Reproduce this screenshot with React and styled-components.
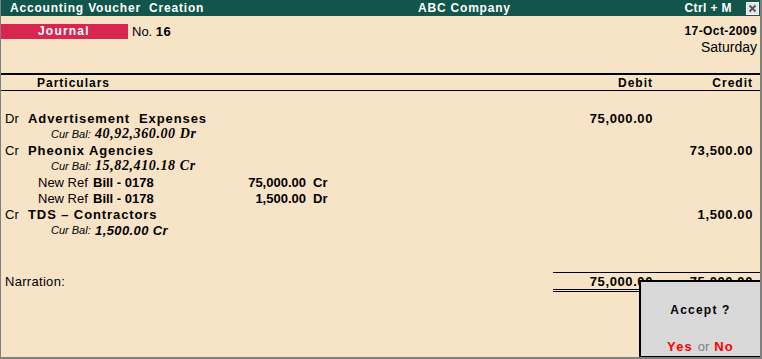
import styled, { createGlobalStyle } from 'styled-components';

const GlobalStyle = createGlobalStyle`
  html, body {
    margin: 0;
    padding: 0;
    background: #ffffff;
  }
  * {
    box-sizing: border-box;
  }
`;

const colors = {
  bg: '#f7e3c6',
  title: '#12554a',
  red: '#d92650',
  border: '#808080',
  black: '#000000',
  box: '#d9d9d9',
  alert: '#ff0000',
};

const rows = [
  { type: 'ledger', side: 'Dr', name: 'Advertisement  Expenses', debit: '75,000.00' },
  { type: 'bal', value: '40,92,360.00 Dr', serif: true },
  { type: 'ledger', side: 'Cr', name: 'Pheonix Agencies', credit: '73,500.00' },
  { type: 'bal', value: '15,82,410.18 Cr', serif: true },
  { type: 'ref', bill: 'Bill - 0178', amount: '75,000.00', dc: 'Cr' },
  { type: 'ref', bill: 'Bill - 0178', amount: '1,500.00', dc: 'Dr' },
  { type: 'ledger', side: 'Cr', name: 'TDS \u2013 Contractors', credit: '1,500.00' },
  { type: 'bal', value: '1,500.00 Cr' },
];

const App = () => {
  return (
    <>
      <GlobalStyle />
      <StWindow>
        <StTitleBar>
          <StTitleLeft>Accounting Voucher&nbsp; Creation</StTitleLeft>
          <StTitleCenter>ABC Company</StTitleCenter>
          <StTitleRight>Ctrl + M</StTitleRight>
          <StClose>
            <svg width="11" height="11" viewBox="0 0 11 11">
              <path d="M2.5 2.5 L8.5 8.5 M8.5 2.5 L2.5 8.5" stroke="#555" strokeWidth="1.8" />
            </svg>
          </StClose>
        </StTitleBar>

        <StHead>
          <StVoucher>
            <StBadge>Journal</StBadge>
            <StNo>
              No. <b>16</b>
            </StNo>
          </StVoucher>
          <StDate>
            <b>17-Oct-2009</b>
            <span>Saturday</span>
          </StDate>
        </StHead>

        <StColumns>
          <StParticulars>Particulars</StParticulars>
          <StAmountHead>Debit</StAmountHead>
          <StAmountHead>Credit</StAmountHead>
        </StColumns>

        <StBody>
          {rows.map((row, i) => (
            <StRow key={i}>
              {row.type === 'ledger' && (
                <StCell>
                  <StSide>{row.side}</StSide>
                  <StLedger>{row.name}</StLedger>
                </StCell>
              )}
              {row.type === 'bal' && (
                <StCell $indent={50}>
                  <StBalLabel>Cur Bal:</StBalLabel>
                  <StBalValue $serif={row.serif}>{row.value}</StBalValue>
                </StCell>
              )}
              {row.type === 'ref' && (
                <StCell $indent={37}>
                  <StRefLabel>New Ref</StRefLabel>
                  <StBill>{row.bill}</StBill>
                  <StRefAmount>{row.amount}</StRefAmount>
                  <StRefDc>{row.dc}</StRefDc>
                </StCell>
              )}
              <StAmount>{row.debit}</StAmount>
              <StAmount>{row.credit}</StAmount>
            </StRow>
          ))}
        </StBody>

        <StFooter>
          <StNarration>Narration:</StNarration>
          <StTotals>
            <StAmount>75,000.00</StAmount>
            <StAmount>75,000.00</StAmount>
          </StTotals>
        </StFooter>

        <StAccept>
          <StAcceptTitle>Accept ?</StAcceptTitle>
          <StAcceptChoice>
            <em>Yes</em> <span>or</span> <em>No</em>
          </StAcceptChoice>
        </StAccept>
      </StWindow>
    </>
  );
};

export default App;

const StWindow = styled.div`
  position: relative;
  width: 762px;
  height: 359px;
  background: ${colors.bg};
  border-left: 1px solid ${colors.border};
  border-right: 2px solid ${colors.border};
  border-bottom: 2px solid ${colors.border};
  font-family: 'Liberation Sans', Arial, sans-serif;
  font-size: 13px;
  color: ${colors.black};
  overflow: hidden;
  display: flex;
  flex-direction: column;
`;

const StTitleBar = styled.div`
  display: flex;
  align-items: center;
  height: 16px;
  margin-left: -1px;
  margin-right: -2px;
  padding-left: 10px;
  background: ${colors.title};
  color: #ffffff;
  font-size: 12px;
  font-weight: 700;
  letter-spacing: 0.8px;
`;

const StTitleLeft = styled.div`
  width: 408px;
  white-space: nowrap;
`;

const StTitleCenter = styled.div`
  flex: 1;
  white-space: nowrap;
`;

const StTitleRight = styled.div`
  white-space: nowrap;
  margin-right: 14px;
  letter-spacing: 0.4px;
`;

const StClose = styled.div`
  display: flex;
  align-items: center;
  justify-content: center;
  width: 13px;
  height: 13px;
  margin-right: 3px;
  background: #e4e4e4;
  border: 1px solid #ffffff;
`;

const StHead = styled.div`
  display: flex;
  justify-content: space-between;
  align-items: flex-start;
  padding: 7px 3px 0 0;
  height: 59px;
  border-bottom: 2px solid ${colors.black};
`;

const StVoucher = styled.div`
  display: flex;
  align-items: center;
  height: 16px;
`;

const StBadge = styled.div`
  width: 127px;
  height: 15px;
  line-height: 15px;
  padding-left: 37px;
  background: ${colors.red};
  color: #ffffff;
  font-size: 12px;
  font-weight: 700;
  letter-spacing: 1.2px;
`;

const StNo = styled.div`
  margin-left: 4px;
  b {
    letter-spacing: 0.5px;
  }
`;

const StDate = styled.div`
  display: flex;
  flex-direction: column;
  align-items: flex-end;
  line-height: 16px;
  b {
    font-size: 12px;
    letter-spacing: 0.4px;
  }
  span {
    font-size: 14px;
  }
`;

const StColumns = styled.div`
  display: flex;
  align-items: center;
  height: 16px;
  padding-right: 7px;
  border-bottom: 1px solid ${colors.black};
  font-size: 12px;
  font-weight: 700;
  letter-spacing: 1px;
`;

const StParticulars = styled.div`
  flex: 1;
  padding-left: 36px;
`;

const StAmountHead = styled.div`
  width: 100px;
  text-align: right;
`;

const StBody = styled.div`
  padding-top: 19px;
  flex: 1;
`;

const StRow = styled.div`
  display: flex;
  align-items: center;
  height: 16px;
  padding-right: 7px;
  white-space: nowrap;
`;

const StCell = styled.div`
  flex: 1;
  display: flex;
  align-items: center;
  padding-left: ${(p) => p.$indent || 4}px;
`;

const StSide = styled.span`
  width: 23px;
`;

const StLedger = styled.span`
  font-size: 13px;
  font-weight: 700;
  letter-spacing: 0.9px;
  white-space: pre;
`;

const StBalLabel = styled.span`
  flex-shrink: 0;
  font-size: 11px;
  font-style: italic;
  width: 44px;
`;

const StBalValue = styled.span`
  font-family: ${(p) => (p.$serif ? "'Liberation Serif', 'Times New Roman', serif" : "'Liberation Sans', Arial, sans-serif")};
  font-size: ${(p) => (p.$serif ? '14px' : '13px')};
  font-weight: 700;
  font-style: italic;
  letter-spacing: ${(p) => (p.$serif ? '0.6px' : '0.4px')};
`;

const StRefLabel = styled.span`
  width: 55px;
`;

const StBill = styled.span`
  width: 100px;
  font-weight: 700;
`;

const StRefAmount = styled.span`
  width: 113px;
  text-align: right;
  font-weight: 700;
`;

const StRefDc = styled.span`
  margin-left: 7px;
  font-weight: 700;
`;

const StAmount = styled.div`
  width: 100px;
  text-align: right;
  font-size: 13px;
  font-weight: 700;
  letter-spacing: 0.6px;
`;

const StFooter = styled.div`
  display: flex;
  align-items: flex-start;
  height: 85px;
`;

const StNarration = styled.div`
  flex: 1;
  padding-left: 4px;
  padding-top: 2px;
  line-height: 16px;
  letter-spacing: 0.3px;
`;

const StTotals = styled.div`
  display: flex;
  align-items: center;
  width: 207px;
  height: 20px;
  padding-right: 7px;
  border-top: 1px solid ${colors.black};
  border-bottom: 3px double ${colors.black};
`;

const StAccept = styled.div`
  position: absolute;
  left: 638px;
  top: 280px;
  width: 123px;
  height: 78px;
  background: ${colors.box};
  border: 2px solid ${colors.black};
  display: flex;
  flex-direction: column;
  align-items: center;
  font-size: 12px;
  font-weight: 700;
  letter-spacing: 1.2px;
`;

const StAcceptTitle = styled.div`
  margin-top: 21px;
`;

const StAcceptChoice = styled.div`
  margin-top: 22px;
  font-size: 13px;
  em {
    font-style: normal;
    color: ${colors.alert};
  }
  span {
    font-weight: 400;
    color: #808080;
    letter-spacing: 0;
  }
`;
